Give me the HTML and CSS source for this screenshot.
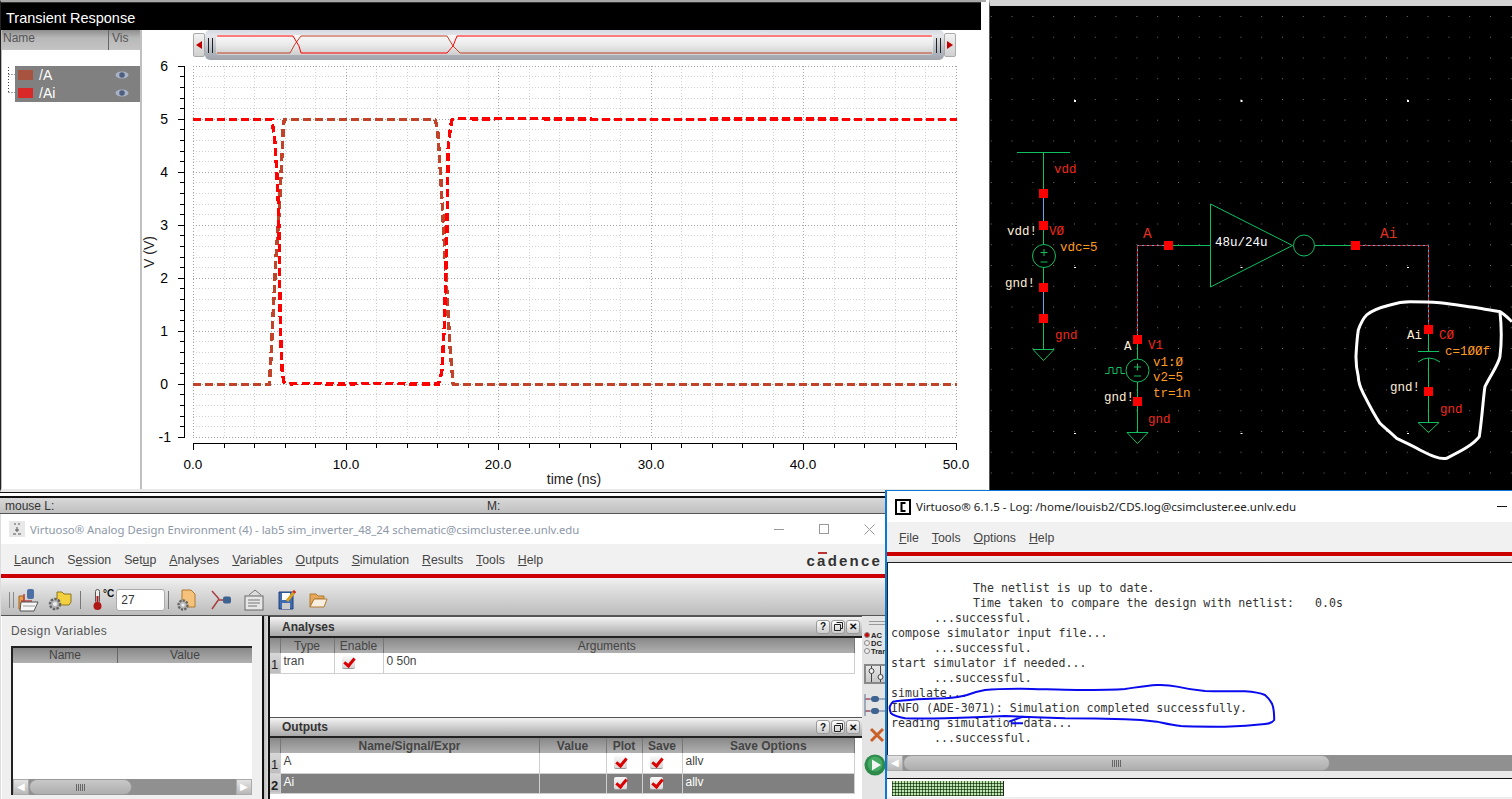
FILE: index.html
```html
<!DOCTYPE html>
<html lang="en">
<head>
    <meta charset="UTF-8">
    <title>Virtuoso - Transient Response</title>
    <link rel="stylesheet" href="styles.css">
</head>
<body>
<main class="desktop">

    <!-- waveform window -->
    <section class="win plot-win">
        <header class="plot-title">Transient Response</header>
        <div class="plot-body">
            <aside class="legend">
                <div class="legend-head"><span class="legend-name">Name</span><span class="legend-vis">Vis</span></div>
                <div class="legend-list">
                    <svg class="legend-tree" width="8" height="30" viewBox="0 0 8 30">
                        <path d="M1.5 0V25.500M1.500 7.500H8M1.500 25.500H8" fill="none" stroke="#444" stroke-dasharray="1 2"/>
                    </svg>
                    <div class="legend-rows">
                        <div class="legend-row"><i class="swatch swatch-a"></i><span>/A</span><svg class="eye" width="14" height="10" viewBox="0 0 14 10"><ellipse cx="7" cy="5" rx="6.500" ry="3.500" fill="#a9b4c6"/><circle cx="7" cy="5" r="2.800" fill="#4f5f7d"/></svg></div>
                        <div class="legend-row"><i class="swatch swatch-ai"></i><span>/Ai</span><svg class="eye" width="14" height="10" viewBox="0 0 14 10"><ellipse cx="7" cy="5" rx="6.500" ry="3.500" fill="#a9b4c6"/><circle cx="7" cy="5" r="2.800" fill="#4f5f7d"/></svg></div>
                    </div>
                </div>
            </aside>
            <div class="plot-area">
                <div class="overview">
                    <span class="ov-btn"><i class="tri-left"></i></span>
                    <div class="ov-track">
                        <span class="ov-grip"></span>
                        <div class="ov-window">
                            <svg width="716" height="20" viewBox="216 36 716 20" preserveAspectRatio="none">
                                <path d="M217 54H290L295 45L301 37H447L453 47L460 54H932" fill="none" stroke="#c0432a"/>
                                <path d="M217 37H293L299 47L301 54H447L453 47L457 37H932" fill="none" stroke="#ff0000"/>
                            </svg>
                        </div>
                        <span class="ov-grip"></span>
                    </div>
                    <span class="ov-btn"><i class="tri-right"></i></span>
                </div>
                <svg class="plot-svg" width="843" height="430" viewBox="142 60 843 430">
                    <path shape-rendering="crispEdges" d="M224.500 66V437M254.500 66V437M285.500 66V437M315.500 66V437M376.500 66V437M407.500 66V437M437.500 66V437M468.500 66V437M529.500 66V437M559.500 66V437M590.500 66V437M620.500 66V437M681.500 66V437M712.500 66V437M742.500 66V437M773.500 66V437M834.500 66V437M864.500 66V437M895.500 66V437M925.500 66V437M193 76.500H957M193 87.500H957M193 98.500H957M193 108.500H957M193 129.500H957M193 140.500H957M193 151.500H957M193 161.500H957M193 182.500H957M193 193.500H957M193 204.500H957M193 214.500H957M193 235.500H957M193 246.500H957M193 257.500H957M193 267.500H957M193 288.500H957M193 299.500H957M193 310.500H957M193 320.500H957M193 341.500H957M193 352.500H957M193 363.500H957M193 373.500H957M193 394.500H957M193 405.500H957M193 416.500H957M193 426.500H957" fill="none" stroke="#d2d2d2" stroke-dasharray="1 2"/>
                    <path shape-rendering="crispEdges" d="M193.500 66V437M346.500 66V437M498.500 66V437M651.500 66V437M803.500 66V437M956.500 66V437M193 66.500H957M193 119.500H957M193 172.500H957M193 225.500H957M193 278.500H957M193 331.500H957M193 384.500H957M193 437.500H957" fill="none" stroke="#a4a4a4" stroke-dasharray="1 2"/>
                    <path shape-rendering="crispEdges" d="M184.500 66V437M178 66.500H185M180 76.500H185M180 87.500H185M180 98.500H185M180 108.500H185M178 119.500H185M180 129.500H185M180 140.500H185M180 151.500H185M180 161.500H185M178 172.500H185M180 182.500H185M180 193.500H185M180 204.500H185M180 214.500H185M178 225.500H185M180 235.500H185M180 246.500H185M180 257.500H185M180 267.500H185M178 278.500H185M180 288.500H185M180 299.500H185M180 310.500H185M180 320.500H185M178 331.500H185M180 341.500H185M180 352.500H185M180 363.500H185M180 373.500H185M178 384.500H185M180 394.500H185M180 405.500H185M180 416.500H185M180 426.500H185M178 437.500H185" fill="none" stroke="#000"/>
                    <path shape-rendering="crispEdges" d="M193 443.500H957M193.500 443V450M224.500 443V448M254.500 443V448M285.500 443V448M315.500 443V448M346.500 443V450M376.500 443V448M407.500 443V448M437.500 443V448M468.500 443V448M498.500 443V450M529.500 443V448M559.500 443V448M590.500 443V448M620.500 443V448M651.500 443V450M681.500 443V448M712.500 443V448M742.500 443V448M773.500 443V448M803.500 443V450M834.500 443V448M864.500 443V448M895.500 443V448M925.500 443V448M956.500 443V450" fill="none" stroke="#000"/>

                    <g class="tick-y">
                        <text x="168" y="71">6</text>
                        <text x="168" y="124">5</text>
                        <text x="168" y="177">4</text>
                        <text x="168" y="230">3</text>
                        <text x="168" y="283">2</text>
                        <text x="168" y="336">1</text>
                        <text x="168" y="389">0</text>
                        <text x="171" y="442">-1</text>
                    </g>
                    <g class="tick-x">
                        <text x="193" y="469">0.0</text>
                        <text x="346" y="469">10.0</text>
                        <text x="498" y="469">20.0</text>
                        <text x="651" y="469">30.0</text>
                        <text x="803" y="469">40.0</text>
                        <text x="956" y="469">50.0</text>
                    </g>
                    <text class="axis-title" x="574" y="484">time (ns)</text>
                    <text class="axis-title" transform="translate(154 252) rotate(-90)">V (V)</text>

                    <path class="wave wave-a" d="M193 384.500H269.300L270.700 363L273.300 310L276 257L279.300 210L281.700 160L283.300 127L284.300 119.500H435L437.700 130L440.700 177L443.300 223L445.700 270L448.300 317L450.700 357L453.300 384.500H957"/>
                    <path class="wave wave-ai" d="M193 119.500H272L275 143L278 193L279.300 243L280 310L281 343L282.300 373L284 382L288 384L300 383.500L340 384L380 383.500L420 384L438.300 384L441.700 373L444.300 327L446.700 243L448.300 143L451.700 120L458 118.500L480 119L520 118.500L560 119L640 119.500L760 119L957 119.500"/>
                </svg>
            </div>
        </div>
    </section>

    <!-- schematic window -->
    <section class="win schem-win">
        <svg width="522" height="484" viewBox="990 6 522 484">
            <defs>
                <pattern id="snap" x="1074" y="16" width="20.800" height="20.750" patternUnits="userSpaceOnUse">
                    <rect width="1" height="1" fill="#6e6e6e" shape-rendering="crispEdges"/>
                </pattern>
                <pattern id="snap-major" x="1074" y="100" width="166.500" height="166" patternUnits="userSpaceOnUse">
                    <rect width="2" height="2" fill="#fff" shape-rendering="crispEdges"/>
                </pattern>
            </defs>
            <rect x="990" y="6" width="522" height="484" fill="url(#snap)"/>
            <rect x="990" y="6" width="522" height="484" fill="url(#snap-major)"/>

            <g class="sym">
                <path d="M1017 152.500H1070M1043.500 152V193M1043.500 225V244M1043.500 267V287M1043.500 318V349M1033 349.500H1054L1043.500 360.500Z"/>
                <circle cx="1044" cy="256" r="11.500"/>
                <path d="M1044 249V256M1040.500 252.500H1047.500M1040.500 262H1047.500"/>
                <path d="M1168.500 245.500H1210M1210.500 204V287L1292.500 245.500ZM1315 245.500H1355"/>
                <circle cx="1304" cy="245.500" r="10.500"/>
                <path d="M1137.500 339V359M1137.500 382V432M1127 432.500H1148L1137.500 443.500Z"/>
                <circle cx="1137.500" cy="370.500" r="11.500"/>
                <path d="M1137.500 363.500V370.500M1134 367H1141M1134 376H1141"/>
                <path d="M1105 373.500H1109V367.500H1113V373.500H1117V367.500H1121V373.500H1125"/>
                <path d="M1428.500 329V351M1418 351.500H1439M1418 362Q1428.500 354 1440 362M1428.500 358V422M1418 422.500H1439L1428.500 432.500Z"/>
            </g>
            <path class="net-blue" d="M1043.500 193V225M1043.500 287V318"/>
            <path class="net-mixed" d="M1137.500 339V245.500H1168.500M1355 245.500H1428.500V329"/>
            <path class="net-mixed-top" d="M1137.500 339V245.500H1168.500M1355 245.500H1428.500V329"/>

            <g fill="#ff0000" shape-rendering="crispEdges">
                <rect x="1039" y="189" width="9" height="9"/>
                <rect x="1039" y="221" width="9" height="9"/>
                <rect x="1039" y="283" width="9" height="9"/>
                <rect x="1039" y="314" width="9" height="9"/>
                <rect x="1133" y="335" width="9" height="9"/>
                <rect x="1133" y="397" width="9" height="9"/>
                <rect x="1164" y="241" width="9" height="9"/>
                <rect x="1351" y="241" width="9" height="9"/>
                <rect x="1424" y="325" width="9" height="9"/>
                <rect x="1424" y="387" width="9" height="9"/>
            </g>

            <g class="lbl lbl-red">
                <text x="1054" y="173">vdd</text>
                <text x="1049" y="235">VØ</text>
                <text x="1055" y="339">gnd</text>
                <text x="1148" y="349">V1</text>
                <text x="1148" y="423">gnd</text>
                <text x="1439" y="339">CØ</text>
                <text x="1440" y="413">gnd</text>
                <text class="lbl-net" x="1143" y="238">A</text>
                <text class="lbl-net" x="1380" y="238">Ai</text>
            </g>
            <g class="lbl lbl-orange">
                <text x="1060" y="251">vdc=5</text>
                <text x="1153" y="366">v1:Ø</text>
                <text x="1153" y="381">v2=5</text>
                <text x="1153" y="397">tr=1n</text>
                <text x="1445" y="355">c=1ØØf</text>
            </g>
            <g class="lbl lbl-pale">
                <text x="1007" y="235">vdd!</text>
                <text x="1005" y="287">gnd!</text>
                <text x="1104" y="401">gnd!</text>
                <text x="1124" y="350">A</text>
                <text x="1407" y="339">Ai</text>
                <text x="1390" y="391">gnd!</text>
            </g>
            <text class="lbl lbl-white" x="1215" y="246">48u/24u</text>

            <path class="loop-white" transform="translate(990 130) scale(.3333)" d="M1566 575C1550 560 1540 550 1530 545C1535 590 1535 640 1530 680C1525 705 1505 730 1485 770C1480 800 1478 850 1468 920C1450 945 1410 965 1370 985C1350 990 1320 975 1290 960C1265 945 1240 935 1220 925C1200 905 1180 890 1170 880C1150 850 1130 810 1120 790C1110 770 1105 750 1105 740C1098 710 1098 680 1098 680C1100 640 1102 620 1105 600C1112 580 1120 565 1130 555C1150 538 1180 530 1200 525C1225 517 1250 515 1260 515C1300 515 1325 516 1350 518C1390 522 1420 528 1450 532C1480 537 1510 541 1530 545"/>
        </svg>
    </section>

    <!-- status strip under the waveform window -->
    <div class="win status-strip"><span class="status-l">mouse L:</span><span class="status-m">M:</span></div>

    <!-- analog design environment -->
    <section class="win ade-win">
        <header class="os-title">
            <svg class="ade-logo" width="16" height="16" viewBox="0 0 16 16"><rect width="16" height="16" fill="#e8e8e8"/><path d="M5 3H7M9 3H11M8 6V11M4 13H7M9 13H12M6 9H10" stroke="#555"/></svg>
            <span class="os-text">Virtuoso® Analog Design Environment (4) - lab5 sim_inverter_48_24 schematic@csimcluster.ee.unlv.edu</span>
            <span class="os-ctrls">
                <i class="ctl-min"></i><i class="ctl-max"></i>
                <svg width="11" height="11" viewBox="0 0 11 11"><path d="M.5 .5L10.500 10.500M10.500 .5L.5 10.500" stroke="#999"/></svg>
            </span>
        </header>
        <nav class="menu ade-menu">
            <span><u>L</u>aunch</span><span>S<u>e</u>ssion</span><span>Set<u>u</u>p</span><span><u>A</u>nalyses</span><span><u>V</u>ariables</span><span><u>O</u>utputs</span><span><u>S</u>imulation</span><span><u>R</u>esults</span><span><u>T</u>ools</span><span><u>H</u>elp</span>
            <span class="cadence">c<span class="cad-a">a</span>dence</span>
        </nav>
        <div class="redbar"></div>
        <div class="toolbar">
            <span class="grip"></span>
            <svg class="tb-launch" width="21" height="24" viewBox="0 0 21 24">
                <path d="M1 8H6V21H1Z" fill="#e8a04a" stroke="#a06820"/>
                <rect x="9" y="1" width="7" height="10" rx="2" fill="#4c6fa5"/>
                <path d="M3 13H14M6 6V14" stroke="#b44" stroke-width="1.500"/>
                <path d="M3 14H20L16 23H2Z" fill="#f6f6f6" stroke="#555"/>
                <path d="M5 18H17" stroke="#999"/>
            </svg>
            <svg class="tb-gearfolder" width="24" height="24" viewBox="0 0 24 24">
                <path d="M9 4H14L16 6H23V14L21 17H9Z" fill="#f2d040" stroke="#8a7420"/>
                <circle cx="7" cy="16" r="5" fill="#b8b8b8" stroke="#666" stroke-width="2.500" stroke-dasharray="2.500 1.200"/>
                <circle cx="7" cy="16" r="2" fill="#eee"/>
            </svg>
            <i class="sep"></i>
            <span class="thermo">
                <svg width="9" height="22" viewBox="0 0 9 22"><rect x="2.500" y=".5" width="4" height="14" rx="2" fill="#eee" stroke="#555"/><path d="M4.500 7V16" stroke="#b01818" stroke-width="2"/><circle cx="4.500" cy="17" r="4" fill="#b01818"/></svg>
                <span class="thermo-unit">°C</span>
            </span>
            <span class="temp-input">27</span>
            <i class="sep"></i>
            <svg class="tb-gdoc" width="19" height="22" viewBox="0 0 19 22">
                <path d="M5 1H14L18 5V18H5Z" fill="#f4c27a" stroke="#b07a30"/>
                <circle cx="6" cy="16" r="4.500" fill="#b8b8b8" stroke="#666" stroke-width="2.400" stroke-dasharray="2.200 1.200"/>
                <circle cx="6" cy="16" r="1.600" fill="#eee"/>
            </svg>
            <svg class="tb-wire" width="20" height="20" viewBox="0 0 20 20">
                <path d="M1 1L8 9M1 19L8 9M8 10H13" stroke="#a83a3a" stroke-width="1.400" fill="none"/>
                <rect x="12" y="6.500" width="8" height="7" rx="2" fill="#3e6390"/>
            </svg>
            <svg class="tb-note" width="20" height="22" viewBox="0 0 20 22">
                <path d="M5 6L11 1L17 6" fill="#ddd" stroke="#777"/>
                <rect x="1" y="7" width="18" height="14" fill="#e6e6e6" stroke="#666"/>
                <path d="M4 11H16M4 14H16M4 17H13" stroke="#777"/>
            </svg>
            <svg class="tb-save" width="19" height="21" viewBox="0 0 19 21">
                <path d="M1 3H15V20H1Z" fill="#3f6cb0" stroke="#1f3f78"/>
                <rect x="4" y="4" width="8" height="7" fill="#fff"/>
                <rect x="4" y="14" width="8" height="6" fill="#ccc"/>
                <path d="M9 12L17 2" stroke="#d8a020" stroke-width="3"/>
                <path d="M15.500 3.800L17 2" stroke="#d03030" stroke-width="3"/>
            </svg>
            <svg class="tb-open" width="19" height="18" viewBox="0 0 19 18">
                <path d="M1 3H7L9 5H15V8H5L1 16Z" fill="#e8a85c" stroke="#b07a30"/>
                <path d="M5 8H18L15 16H1Z" fill="#f8efe0" stroke="#b07a30"/>
            </svg>
        </div>
        <div class="ade-body">
            <div class="vars">
                <div class="vars-label">Design Variables</div>
                <div class="vars-table">
                    <div class="vars-head"><span>Name</span><span>Value</span></div>
                    <div class="vars-rows"></div>
                    <div class="hscroll vars-scroll">
                        <span class="hs-btn">&#9664;</span>
                        <span class="hs-thumb"><i class="hs-grip"></i></span>
                        <span class="hs-rest"></span>
                        <span class="hs-btn">&#9654;</span>
                    </div>
                </div>
            </div>
            <div class="split"></div>
            <div class="docks">
                <section class="dock dock-analyses">
                    <header class="dock-title"><span>Analyses</span>
                        <span class="dock-btns"><b>?</b><b><svg width="9" height="9" viewBox="0 0 9 9"><path d="M2.500 .5H8.500V6.500H6.500M.5 2.500H6.500V8.500H.5Z" fill="none" stroke="#222"/></svg></b><b>✕</b></span>
                    </header>
                    <table class="grid">
                        <colgroup><col class="c-num"><col class="c-type"><col class="c-enable"><col class="c-args"></colgroup>
                        <thead><tr><th></th><th>Type</th><th>Enable</th><th class="th-args">Arguments</th></tr></thead>
                        <tbody>
                            <tr><td class="num">1</td><td>tran</td><td class="chk"><i class="check"></i></td><td>0 50n</td></tr>
                        </tbody>
                    </table>
                </section>
                <section class="dock dock-outputs">
                    <header class="dock-title"><span>Outputs</span>
                        <span class="dock-btns"><b>?</b><b><svg width="9" height="9" viewBox="0 0 9 9"><path d="M2.500 .5H8.500V6.500H6.500M.5 2.500H6.500V8.500H.5Z" fill="none" stroke="#222"/></svg></b><b>✕</b></span>
                    </header>
                    <table class="grid grid-out">
                        <colgroup><col class="c-num"><col class="c-name"><col class="c-value"><col class="c-plot"><col class="c-save"><col class="c-opts"></colgroup>
                        <thead><tr><th></th><th>Name/Signal/Expr</th><th>Value</th><th>Plot</th><th>Save</th><th>Save Options</th></tr></thead>
                        <tbody>
                            <tr><td class="num">1</td><td>A</td><td></td><td class="chk"><i class="check"></i></td><td class="chk"><i class="check"></i></td><td>allv</td></tr>
                            <tr class="sel"><td class="num">2</td><td>Ai</td><td></td><td class="chk"><i class="check"></i></td><td class="chk"><i class="check"></i></td><td>allv</td></tr>
                        </tbody>
                    </table>
                </section>
            </div>
            <div class="side-tools">
                <span class="side-grip"></span>
                <div class="modes">
                    <span><i class="radio radio-on"></i>AC</span>
                    <span><i class="radio"></i>DC</span>
                    <span><i class="radio"></i>Trans</span>
                </div>
                <span class="tune">
                    <svg width="16" height="16" viewBox="0 0 16 16"><path d="M3.500 0V16M12.500 0V16" stroke="#444"/><circle cx="3.500" cy="5" r="2.500" fill="#eee" stroke="#444"/><circle cx="12.500" cy="11" r="2.500" fill="#eee" stroke="#444"/></svg>
                </span>
                <svg class="nets" width="24" height="24" viewBox="0 0 24 24">
                    <path d="M1 1V23M1 6H22M1 18H22" stroke="#5a6f90" fill="none"/>
                    <path d="M2 6H6M2 18H6" stroke="#c04040"/>
                    <rect x="7" y="3" width="8" height="6" rx="3" fill="#3e6390"/>
                    <rect x="7" y="15" width="8" height="6" rx="3" fill="#3e6390"/>
                </svg>
                <svg class="cancel" width="16" height="16" viewBox="0 0 16 16"><path d="M2 2L14 14M14 2L2 14" stroke="#c8622a" stroke-width="3"/></svg>
                <svg class="run" width="22" height="22" viewBox="0 0 22 22"><circle cx="11" cy="11" r="10.500" fill="#2e8a4a"/><circle cx="11" cy="10" r="7.500" fill="#45a863"/><path d="M8 5.500V16.500L17 11Z" fill="#f4f4f4"/></svg>
            </div>
        </div>
    </section>

    <!-- CIW log -->
    <section class="win log-win">
        <header class="os-title log-title">
            <svg width="16" height="16" viewBox="0 0 16 16"><rect x="1" y="1" width="14" height="14" fill="#fff" stroke="#000" stroke-width="2"/><path d="M10.500 4H6.500V12H10.500" fill="none" stroke="#000" stroke-width="2"/></svg>
            <span class="os-text">Virtuoso® 6.1.5 - Log: /home/louisb2/CDS.log@csimcluster.ee.unlv.edu</span>
            <span class="os-ctrls"><i class="ctl-min ctl-dark"></i></span>
        </header>
        <nav class="menu log-menu">
            <span><u>F</u>ile</span><span><u>T</u>ools</span><span><u>O</u>ptions</span><span><u>H</u>elp</span>
        </nav>
        <div class="redbar"></div>
        <div class="log-gap"></div>
        <div class="log-text">
            <div class="deep">The netlist is up to date.</div>
            <div class="deep">Time taken to compare the design with netlist:   0.0s</div>
            <div class="mid">...successful.</div>
            <div>compose simulator input file...</div>
            <div class="mid">...successful.</div>
            <div>start simulator if needed...</div>
            <div class="mid">...successful.</div>
            <div>simulate...</div>
            <div>INFO (ADE-3071): Simulation completed successfully.</div>
            <div>reading simulation data...</div>
            <div class="mid">...successful.</div>
        </div>
        <div class="hscroll log-scroll">
            <span class="hs-btn">&#9664;</span>
            <span class="hs-thumb"><i class="hs-grip"></i></span>
            <span class="hs-rest"></span>
        </div>
        <div class="log-gap2"></div>
        <div class="cmdline"><span class="cmd-busy"></span></div>
    </section>

    <!-- blue marker drawn over the log -->
    <svg class="ink" width="1512" height="799" viewBox="0 0 1512 799">
        <path class="loop-blue" transform="translate(885 490) scale(.4 .3333)" d="M205 615C220 608 235 603 250 600C280 596 310 596 340 596C390 597 440 600 480 600C530 600 570 600 600 597C630 592 650 587 680 585C700 584 715 586 730 590C755 597 780 601 800 603C840 604 870 604 900 604C925 606 940 610 950 615C962 628 968 640 970 650C973 665 973 680 973 690C968 698 960 701 950 702C920 706 880 709 850 710C810 710 770 710 740 708C715 705 700 700 680 695C650 691 625 689 600 688C550 686 500 685 450 685C400 683 350 680 300 678C250 680 200 683 150 685C110 686 80 686 50 685C35 682 22 677 15 670C12 662 11 656 12 650C14 642 18 637 20 635C40 632 60 630 80 628C105 627 130 626 150 625C170 623 190 620 205 615M310 695L345 680M315 700H345"/>
    </svg>
</main>
</body>
</html>
```

FILE: styles.css
```css
* {
    box-sizing: border-box;
}

html, body {
    margin: 0;
    padding: 0;
    overflow: hidden;
}

body {
    font-family: "Liberation Sans", Arial, sans-serif;
    background-color: #fff;
}

.desktop {
    position: relative;
    width: 1512px;
    height: 799px;
    background-color: #fff;
    overflow: hidden;
}

/* windows sit on the desktop at their own spot */
.win {
    position: absolute;
}

.plot-win {
    left: 0;
    top: 0;
    width: 986px;
    height: 492px;
    display: flex;
    flex-direction: column;
    border-top: 2px solid #a8a8a8;
    border-left: 1px solid #222;
    border-bottom: 3px solid #e8e8e8;
    background-color: #fff;
}

.plot-title {
    height: 28px;
    flex: none;
    margin-right: 5px;
    padding: 7px 0 0 5px;
    background-color: #000;
    color: #fff;
    font-size: 14.5px;
    line-height: 17px;
    border-top: 1px solid #333;
}

.plot-body {
    flex: 1;
    display: flex;
    min-height: 0;
}

.legend {
    width: 141px;
    border-right: 2px solid #c0c0c0;
    border-left: 1px solid #bbb;
}

.legend-head {
    height: 20px;
    display: flex;
    font-size: 12px;
    line-height: 16px;
    color: #555;
    background: linear-gradient(#8e8e8e, #b8b8b8 40%, #c4c4c4);
}

.legend-name {
    width: 107px;
    padding-left: 1px;
    border-right: 1px solid #666;
}

.legend-vis {
    padding-left: 3px;
}

.legend-list {
    display: flex;
    padding: 16px 0 0 5px;
}

.legend-tree {
    flex: none;
    margin-top: 1px;
}

.legend-rows {
    width: 125px;
    background-color: #808080;
    color: #fff;
    font-size: 14px;
}

.legend-row {
    height: 18px;
    display: flex;
    align-items: center;
    padding-left: 3px;
}

.legend-row span {
    margin-left: 6px;
    flex: 1;
}

.swatch {
    width: 15px;
    height: 10px;
}

.swatch-a {
    background-color: #a8533f;
}

.swatch-ai {
    background-color: #d82828;
}

.eye {
    margin-right: 11px;
}

.plot-area {
    flex: 1;
    display: flex;
    flex-direction: column;
    min-width: 0;
}

.overview {
    height: 30px;
    flex: none;
    display: flex;
    align-items: center;
    padding-left: 51px;
    width: 814px;
}

.ov-btn {
    flex: none;
    width: 12px;
    height: 24px;
    display: flex;
    align-items: center;
    justify-content: center;
    background: linear-gradient(#f2f2f2, #d0d0d0);
    border: 1px solid #aaa;
    border-radius: 2px;
}

.tri-left, .tri-right {
    width: 0;
    height: 0;
    border-top: 4px solid transparent;
    border-bottom: 4px solid transparent;
}

.tri-left {
    border-right: 6px solid #c00000;
}

.tri-right {
    border-left: 6px solid #c00000;
}

.ov-track {
    flex: 1;
    height: 30px;
    display: flex;
    align-items: center;
    gap: 3px;
    padding: 0 3px;
    border-radius: 5px;
    background: linear-gradient(#d5dae2, #e4e6ea 20%, #b4b8c0 70%, #9ea3ac);
}

.ov-grip {
    flex: none;
    width: 5px;
    height: 15px;
    border-left: 1px solid #222;
    border-right: 1px solid #222;
}

.ov-window {
    flex: 1;
    height: 20px;
    overflow: hidden;
    border-radius: 3px;
    background: linear-gradient(#f8f8f8, #ececec 45%, #cfcfcf);
}

.ov-window svg {
    display: block;
}

.plot-svg {
    display: block;
    flex: none;
}

.tick-y text {
    font-size: 14px;
    text-anchor: end;
}

.tick-x text {
    font-size: 13.5px;
    text-anchor: middle;
}

.axis-title {
    font-size: 14px;
    text-anchor: middle;
    fill: #222;
}

.wave {
    fill: none;
    stroke-width: 3.4;
    stroke-dasharray: 8 4;
    shape-rendering: crispEdges;
}

.wave-a {
    stroke: #c0432a;
}

.wave-ai {
    stroke: #ff0000;
}

/* schematic */
.schem-win {
    left: 989px;
    top: 0;
    width: 523px;
    height: 490px;
    background-color: #000;
    border-top: 6px solid #d4d4d4;
    border-left: 1px solid #555;
}

.schem-win svg {
    display: block;
}

.sym path, .sym circle {
    fill: none;
    stroke: #10c060;
    stroke-width: 1;
}

.net-blue {
    fill: none;
    stroke: #5aa8e8;
}

.net-mixed {
    fill: none;
    stroke: #5aa8e8;
}

.net-mixed-top {
    fill: none;
    stroke: #d02020;
    stroke-dasharray: 3 2;
}

.lbl text, text.lbl {
    font-family: "Liberation Mono", monospace;
    font-size: 12.5px;
}

.lbl-red {
    fill: #f02a1a;
}

.lbl text.lbl-net {
    font-size: 14.5px;
    fill: #e03020;
}

.lbl-orange {
    fill: #ff9a20;
}

.lbl-pale {
    fill: #ffeed6;
}

.lbl-white {
    fill: #fff;
}

.loop-white {
    fill: none;
    stroke: #fff;
    stroke-width: 9;
    stroke-linejoin: round;
}

/* status strip */
.status-strip {
    left: 0;
    top: 492px;
    width: 886px;
    height: 22px;
    padding: 6px 0 0 5px;
    display: flex;
    align-items: center;
    font-size: 12px;
    color: #333;
    border-top: 1px solid #111;
    background: linear-gradient(#fff 3px, #111 3px, #111 5px, #d8d8d8 5px, #c0c0c0);
    border-bottom: 1px solid #555;
}

.status-l {
    width: 482px;
}

/* shared OS title bar */
.ade-win {
    left: 0;
    top: 514px;
    width: 886px;
    height: 285px;
    display: flex;
    flex-direction: column;
    background-color: #efefef;
    border-left: 1px solid #ddd;
}

.os-title {
    height: 30px;
    flex: none;
    display: flex;
    align-items: center;
    padding-left: 8px;
    background-color: #fff;
    font-family: "Noto Sans", sans-serif;
    font-size: 11.35px;
    color: #8d98a8;
}

.os-text {
    margin-left: 5px;
    white-space: nowrap;
}

.os-ctrls {
    margin-left: auto;
    margin-right: 11px;
    display: flex;
    align-items: center;
    gap: 35px;
}

.ctl-min {
    width: 10px;
    border-top: 1px solid #999;
}

.ctl-dark {
    border-top-color: #111;
}

.ctl-max {
    width: 10px;
    height: 10px;
    border: 1px solid #999;
}

.menu {
    display: flex;
    align-items: center;
    background-color: #f1f1f1;
    font-size: 12.3px;
    color: #444;
}

.ade-menu {
    height: 30px;
    flex: none;
    padding: 2px 0 0 13px;
    gap: 13px;
}

.cadence {
    margin-left: auto;
    margin-right: 4px;
    font-size: 15px;
    font-weight: bold;
    letter-spacing: 2.2px;
    color: #333;
}

.cad-a {
    position: relative;
}

.cad-a::before {
    content: "";
    position: absolute;
    left: 1px;
    right: 1px;
    top: 0;
    height: 2px;
    background-color: #b33;
}

.redbar {
    height: 4px;
    flex: none;
    background-color: #cc0000;
}

.toolbar {
    height: 38px;
    flex: none;
    display: flex;
    align-items: center;
    padding: 6px 0 0 8px;
    background: linear-gradient(#f3f3f3, #e4e4e4 20%, #bcbcbc);
    border-bottom: 1px solid #555;
}

.grip {
    width: 5px;
    height: 16px;
    border-left: 1px solid #888;
    border-right: 1px solid #888;
}

.tb-launch {
    margin-left: 4px;
}

.tb-gearfolder {
    margin-left: 9px;
}

.sep {
    width: 1px;
    height: 18px;
    margin-left: 8px;
    background-color: #777;
}

.thermo {
    margin-left: 12px;
    display: flex;
    align-items: flex-start;
    gap: 1px;
    height: 22px;
}

.thermo-unit {
    font-size: 10px;
    font-weight: bold;
    color: #111;
    line-height: 10px;
}

.temp-input {
    width: 49px;
    height: 22px;
    margin-left: 2px;
    padding: 3px 0 0 4px;
    background-color: #fff;
    border: 1px solid #aaa;
    border-radius: 3px;
    font-size: 12px;
    color: #333;
}

.temp-input + .sep {
    margin-left: 3px;
}

.tb-gdoc {
    margin-left: 8px;
}

.tb-wire {
    margin-left: 15px;
}

.tb-note {
    margin-left: 13px;
}

.tb-save {
    margin-left: 14px;
}

.tb-open {
    margin-left: 12px;
}

.ade-body {
    flex: 1;
    display: flex;
    min-height: 0;
}

.vars {
    width: 261px;
    flex: none;
    padding: 8px 10px 0 9px;
    background-color: #efefef;
    border-left: 1px solid #fff;
}

.vars-label {
    height: 22px;
    font-size: 12px;
    color: #555;
    letter-spacing: .4px;
}

.vars-table {
    height: 149px;
    display: flex;
    flex-direction: column;
    border-top: 2px solid #222;
    border-left: 2px solid #222;
    background-color: #fff;
}

.vars-head {
    height: 15px;
    flex: none;
    display: grid;
    grid-template-columns: 105px 1fr;
    font-size: 12px;
    line-height: 15px;
    text-align: center;
    color: #444;
    background: linear-gradient(#888, #b0b0b0);
}

.vars-head span:first-child {
    border-right: 1px solid #666;
}

.vars-rows {
    flex: 1;
}

.hscroll {
    display: flex;
    flex: none;
    height: 16px;
    background-color: #909090;
}

.hs-btn {
    width: 16px;
    flex: none;
    text-align: center;
    font-size: 10px;
    line-height: 14px;
    color: #fff;
    background: linear-gradient(#e4e4e4, #b8b8b8);
    border: 1px solid #aaa;
}

.hs-thumb {
    display: flex;
    align-items: center;
    justify-content: center;
    background: linear-gradient(#c8c8c8, #aeaeae);
    border: 1px solid #999;
    border-radius: 8px;
}

.hs-grip {
    width: 9px;
    height: 7px;
    background: repeating-linear-gradient(90deg, #666 0 1px, transparent 1px 2px);
}

.hs-rest {
    flex: 1;
}

.vars-scroll .hs-thumb {
    width: 103px;
}

.split {
    width: 8px;
    flex: none;
    background: linear-gradient(90deg, #111 2px, #bbb 2px, #ddd 6px, #111 6px);
}

.docks {
    width: 592px;
    flex: none;
    display: flex;
    flex-direction: column;
    background-color: #efefef;
}

.dock-analyses {
    height: 101px;
    flex: none;
    display: flex;
    flex-direction: column;
    background-color: #fff;
}

.dock-outputs {
    flex: 1;
    background-color: #fff;
    overflow: hidden;
}

.dock-title {
    height: 22px;
    display: flex;
    align-items: center;
    padding: 0 2px 0 12px;
    font-size: 12px;
    font-weight: bold;
    color: #333;
    border-top: 1px solid #555;
    border-bottom: 2px solid #222;
    background: linear-gradient(#f4f4f4, #a8a8a8);
}

.dock-outputs .dock-title {
    height: 21px;
}

.dock-btns {
    margin-left: auto;
    display: flex;
    gap: 1px;
}

.dock-btns b {
    width: 14px;
    height: 14px;
    display: flex;
    align-items: center;
    justify-content: center;
    font-size: 10px;
    color: #111;
    border: 1px solid #999;
    border-radius: 3px;
    background: linear-gradient(#fff, #ccc);
}

.grid {
    width: 585px;
    table-layout: fixed;
    border-collapse: collapse;
    font-size: 12px;
    color: #444;
}

.grid th {
    height: 15px;
    padding: 0;
    font-weight: normal;
    text-align: center;
    color: #444;
    background: linear-gradient(#888, #b0b0b0);
    border-right: 1px solid #777;
}

.grid th.th-args {
    padding-right: 24px;
}

.grid td {
    height: 20px;
    padding: 1px 0 4px 3px;
    border: 1px solid #cfcfcf;
    border-width: 0 1px 1px 0;
    vertical-align: top;
}

.grid td.num {
    padding: 4px 0 0 1px;
    background: linear-gradient(#d8d8d8, #bdbdbd);
    font-size: 13px;
    color: #222;
}

.grid td.chk {
    padding: 3px 0 0 7px;
    text-align: left;
}

.grid-out th {
    font-weight: bold;
}

.grid .sel td {
    background: #808080;
    color: #fff;
}

.grid .sel td.num {
    background: linear-gradient(#d8d8d8, #bdbdbd);
    color: #222;
    font-weight: bold;
}

.c-num {
    width: 10px;
}

.c-type {
    width: 54px;
}

.c-enable {
    width: 49px;
}

.c-name {
    width: 259px;
}

.c-value {
    width: 67px;
}

.c-plot {
    width: 36px;
}

.c-save {
    width: 40px;
}

/* red tick on a small raised box */
.check {
    display: inline-block;
    position: relative;
    width: 13px;
    height: 13px;
    border-radius: 2px;
    background: linear-gradient(#f8f8f8, #d8d8d8);
    border-bottom: 1px solid #999;
}

.check::after {
    content: "";
    position: absolute;
    left: 4px;
    top: 0;
    width: 4px;
    height: 8px;
    border-right: 3px solid #d80000;
    border-bottom: 3px solid #d80000;
    transform: rotate(40deg);
}

.side-tools {
    flex: 1;
    display: flex;
    flex-direction: column;
    padding: 5px 0 0 2px;
    background-color: #e4e4e4;
    overflow: hidden;
}

.side-grip {
    height: 4px;
    margin-left: 5px;
    border-top: 1px solid #999;
    border-bottom: 1px solid #999;
}

.modes {
    display: flex;
    flex-direction: column;
    margin-top: 7px;
    font-size: 7.5px;
    font-weight: bold;
    line-height: 8px;
    color: #222;
    white-space: nowrap;
}

.radio {
    display: inline-block;
    width: 6px;
    height: 6px;
    margin-right: 1px;
    background-color: #eee;
    border: 1px solid #888;
    border-radius: 50%;
}

.radio-on {
    background-color: #d00000;
}

.tune {
    width: 24px;
    height: 20px;
    margin-top: 8px;
    display: flex;
    align-items: center;
    justify-content: center;
    border: 2px solid #888;
    background: linear-gradient(#e8e8e8, #c8c8c8);
}

.nets {
    margin-top: 9px;
}

.cancel {
    margin: 10px 0 0 5px;
}

.run {
    margin: 11px 0 0 0;
}

/* log window */
.log-win {
    left: 886px;
    top: 491px;
    width: 626px;
    height: 308px;
    display: flex;
    flex-direction: column;
    background-color: #efefef;
    border-left: 1px solid #0a78d7;
    outline: 1px solid #0a78d7;
}

.log-title {
    height: 31px;
    padding-left: 8px;
    color: #222;
    font-size: 11.5px;
}

.log-title .os-text {
    margin-left: 5px;
}

.log-title .os-ctrls {
    margin-right: 5px;
}

.log-menu {
    height: 30px;
    flex: none;
    padding: 2px 0 0 12px;
    gap: 13px;
}

.log-gap {
    height: 7px;
    flex: none;
    border-bottom: 1px solid #222;
    background: linear-gradient(#f0f0f0, #ddd);
}

.log-text {
    height: 192px;
    flex: none;
    padding: 18px 0 0 3px;
    background-color: #fff;
    border-left: 1px solid #222;
    font-family: "DejaVu Sans Mono", monospace;
    font-size: 11.6px;
    line-height: 15px;
    color: #333;
}

.log-text div {
    white-space: pre;
}

.log-text .deep {
    padding-left: 82px;
}

.log-text .mid {
    padding-left: 43px;
}

.log-scroll .hs-thumb {
    width: 427px;
}

.log-gap2 {
    height: 8px;
    flex: none;
    border-bottom: 1px solid #111;
    background-color: #e8e8e8;
}

.cmdline {
    height: 18px;
    flex: none;
    padding: 2px 0 0 5px;
    background-color: #fff;
}

.cmd-busy {
    display: block;
    width: 112px;
    height: 15px;
    border-right: 1px solid #222;
    background-color: #bfe3b4;
    background-image: repeating-linear-gradient(90deg, #5a7a50 0 1px, transparent 1px 3px), repeating-linear-gradient(0deg, #5a7a50 0 1px, transparent 1px 3px);
    background-blend-mode: multiply;
}

.ink {
    position: absolute;
    left: 0;
    top: 0;
    pointer-events: none;
}

.loop-blue {
    fill: none;
    stroke: #0a0aee;
    stroke-width: 2;
    vector-effect: non-scaling-stroke;
}
```
